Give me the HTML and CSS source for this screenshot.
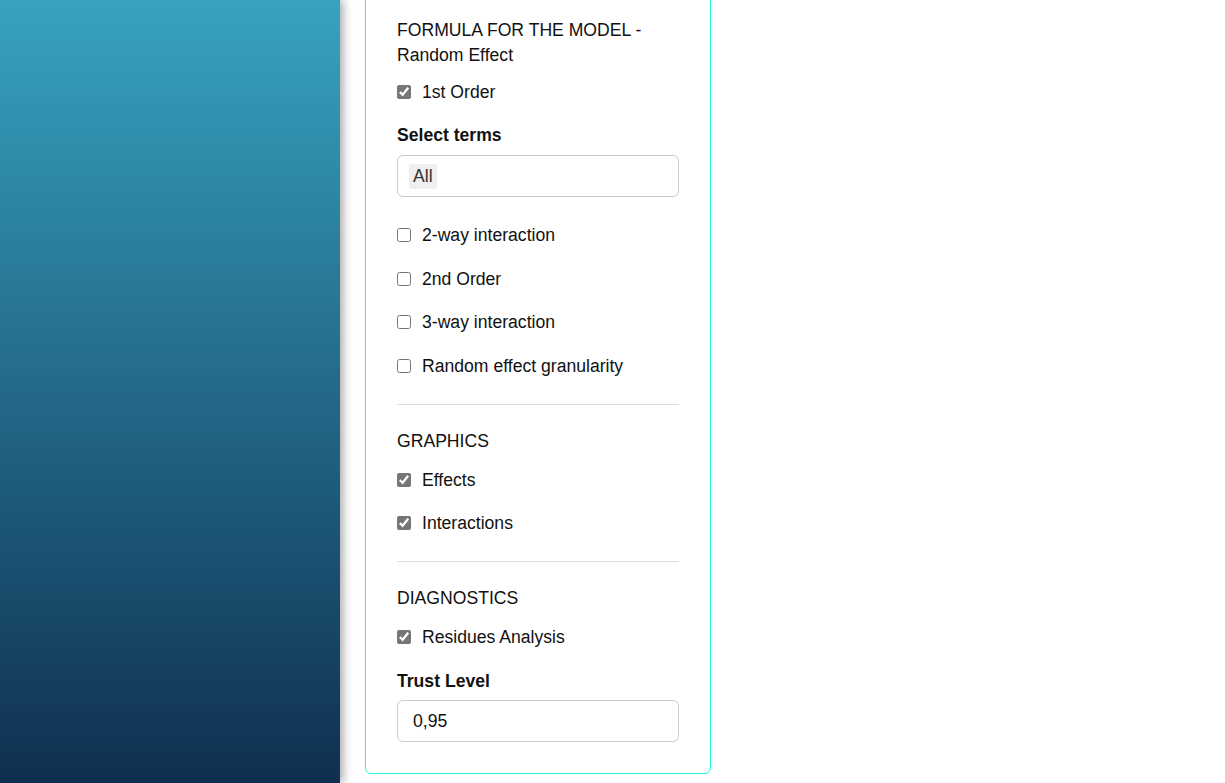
FILE: index.html
```html
<!DOCTYPE html>
<html lang="en">
<head>
<meta charset="utf-8">
<title>Model settings</title>
<link rel="stylesheet" href="styles.css">
</head>
<body>
<div class="layout">
  <aside class="sidebar"></aside>
  <main class="main">
    <section class="card">
      <h3 class="section-title title-formula">FORMULA FOR THE MODEL - Random Effect</h3>
      <label class="check row-first row-formula"><input type="checkbox" checked><span>1st Order</span></label>
      <div class="field-label label-terms">Select terms</div>
      <div class="select-box"><span class="chip">All</span></div>
      <label class="check row-after-input"><input type="checkbox"><span>2-way interaction</span></label>
      <label class="check row-next"><input type="checkbox"><span>2nd Order</span></label>
      <label class="check row-next"><input type="checkbox"><span>3-way interaction</span></label>
      <label class="check row-next"><input type="checkbox"><span>Random effect granularity</span></label>
      <hr class="divider">
      <h3 class="section-title">GRAPHICS</h3>
      <label class="check row-first"><input type="checkbox" checked><span>Effects</span></label>
      <label class="check row-next"><input type="checkbox" checked><span>Interactions</span></label>
      <hr class="divider">
      <h3 class="section-title">DIAGNOSTICS</h3>
      <label class="check row-first"><input type="checkbox" checked><span>Residues Analysis</span></label>
      <div class="field-label label-trust">Trust Level</div>
      <input class="text-input" type="text" value="0,95">
    </section>
  </main>
</div>
</body>
</html>
```

FILE: styles.css
```css
* { box-sizing: border-box; }
html, body { margin: 0; padding: 0; height: 100%; }
body {
  font-family: "Liberation Sans", Arial, sans-serif;
  font-size: 17.6px;
  color: #111;
  background: #fff;
  overflow: hidden;
}
.layout {
  display: flex;
  height: 100vh;
}
.sidebar {
  width: 340px;
  flex: 0 0 340px;
  background: linear-gradient(to bottom, #37a3bf 0%, #0f2f50 100%);
  box-shadow: 3px 0 9px rgba(0, 0, 0, 0.35);
  position: relative;
  z-index: 1;
}
.main {
  flex: 1;
  display: flex;
  flex-direction: column;
  justify-content: flex-end;
  overflow: hidden;
  padding: 0 0 9px 25px;
}
.card {
  width: 346px;
  flex: 0 0 auto;
  border: 1px solid #22f5dc;
  border-radius: 6px;
  padding: 31px;
  display: flex;
  flex-direction: column;
}
.section-title {
  margin: 0;
  font-size: 17.6px;
  font-weight: normal;
  line-height: 25px;
}
.check {
  display: flex;
  align-items: center;
  gap: 11px;
  height: 24px;
  line-height: 24px;
}
.check input {
  margin: 0;
  width: 14px;
  height: 14px;
  accent-color: #767676;
}
.row-first { margin-top: 14px; }
.row-formula { margin-top: 12px; }
.row-next { margin-top: 19.4px; }
.row-after-input { margin-top: 26px; }
.field-label {
  font-weight: bold;
  line-height: 24px;
}
.label-terms { margin-top: 19px; }
.label-trust { margin-top: 20px; }
.select-box {
  margin-top: 8px;
  height: 42px;
  border: 1px solid #ccc;
  border-radius: 6px;
  padding: 0 11px;
  display: flex;
  align-items: center;
}
.chip {
  background: #efefef;
  color: #333;
  border-radius: 3px;
  padding: 0 4px;
  line-height: 25px;
}
.divider {
  margin: 26px 0 0 0;
  border: 0;
  border-top: 1px solid #ddd;
  height: 0;
}
.divider + .section-title { margin-top: 24px; }
.text-input {
  margin-top: 7px;
  height: 42px;
  width: 100%;
  border: 1px solid #ccc;
  border-radius: 6px;
  padding: 0 15px;
  font-family: "Liberation Sans", Arial, sans-serif;
  font-size: 17.6px;
  color: #111;
  outline: none;
}
```
